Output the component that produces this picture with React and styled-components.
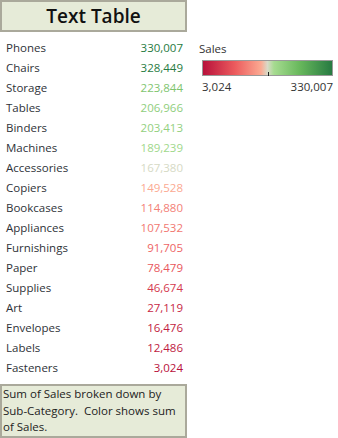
import styled, { createGlobalStyle } from "styled-components";

const GlobalStyle = createGlobalStyle`
  body {
    margin: 0;
    background: #fff;
    font-family: "Open Sans", "DejaVu Sans", sans-serif;
  }
`;

const STOPS = [
  [0, [184, 17, 59]],
  [0.25, [236, 92, 94]],
  [0.45, [251, 170, 146]],
  [0.5, [217, 218, 200]],
  [0.55, [166, 219, 144]],
  [0.75, [104, 184, 92]],
  [1, [39, 122, 66]],
];

const MIN = 3024;
const MAX = 330007;

const colorFor = (value) => {
  const t = (value - MIN) / (MAX - MIN);
  for (let i = 1; i < STOPS.length; i++) {
    const [t1, c1] = STOPS[i];
    const [t0, c0] = STOPS[i - 1];
    if (t <= t1) {
      const k = (t - t0) / (t1 - t0);
      const c = c0.map((v, j) => Math.round(v + (c1[j] - v) * k));
      return `rgb(${c.join(",")})`;
    }
  }
  return "rgb(39,122,66)";
};

const rows = [
  ["Phones", 330007],
  ["Chairs", 328449],
  ["Storage", 223844],
  ["Tables", 206966],
  ["Binders", 203413],
  ["Machines", 189239],
  ["Accessories", 167380],
  ["Copiers", 149528],
  ["Bookcases", 114880],
  ["Appliances", 107532],
  ["Furnishings", 91705],
  ["Paper", 78479],
  ["Supplies", 46674],
  ["Art", 27119],
  ["Envelopes", 16476],
  ["Labels", 12486],
  ["Fasteners", 3024],
];

const Page = styled.div`
  display: flex;
  width: 338px;
  height: 438px;
`;

const LeftColumn = styled.div`
  width: 187px;
  display: flex;
  flex-direction: column;
`;

const TitleBox = styled.div`
  height: 30px;
  border: 2px solid #aaa99b;
  background: #e6ebd8;
  display: flex;
  align-items: center;
  justify-content: center;
  font-size: 19px;
  font-weight: 600;
  color: #111;
`;

const Table = styled.div`
  padding: 5px 4px 0 6px;
  display: flex;
  flex-direction: column;
`;

const Row = styled.div`
  height: 20px;
  display: flex;
  align-items: center;
  justify-content: space-between;
  font-size: 11.5px;
`;

const Label = styled.span`
  color: #2e3238;
`;

const Value = styled.span`
  color: ${(p) => p.$color};
`;

const Caption = styled.div`
  margin-top: 7px;
  height: 53px;
  border: 2px solid #aaa99b;
  background: #e6ebd8;
  padding: 0 0 0 1px;
  font-size: 11.5px;
  line-height: 16.5px;
  color: #222;
`;

const Legend = styled.div`
  margin: 41px 0 0 12px;
  display: flex;
  flex-direction: column;
  width: 134px;
`;

const LegendTitle = styled.div`
  font-size: 11.5px;
  color: #333;
  margin-bottom: 4px;
`;

const Ramp = styled.div`
  position: relative;
  margin-left: 3px;
  height: 14px;
  border: 1px solid #999;
  background: linear-gradient(
    to right,
    #b8113b 0%,
    #ec5c5e 25%,
    #fbaa92 45%,
    #d9dac8 50%,
    #a6db90 55%,
    #68b85c 75%,
    #277a42 100%
  );
`;

const Tick = styled.div`
  position: absolute;
  left: 50%;
  bottom: -1px;
  width: 1px;
  height: 4px;
  background: #222;
`;

const RampLabels = styled.div`
  margin-left: 3px;
  display: flex;
  justify-content: space-between;
  font-size: 11.5px;
  color: #333;
  margin-top: 3px;
`;

export default function App() {
  return (
    <Page>
      <GlobalStyle />
      <LeftColumn>
        <TitleBox>Text Table</TitleBox>
        <Table>
          {rows.map(([name, v]) => (
            <Row key={name}>
              <Label>{name}</Label>
              <Value $color={colorFor(v)}>{v.toLocaleString("en-US")}</Value>
            </Row>
          ))}
        </Table>
        <Caption>
          Sum of Sales broken down by
          <br />
          Sub-Category.&nbsp; Color shows sum
          <br />
          of Sales.
        </Caption>
      </LeftColumn>
      <Legend>
        <LegendTitle>Sales</LegendTitle>
        <Ramp>
          <Tick />
        </Ramp>
        <RampLabels>
          <span>3,024</span>
          <span>330,007</span>
        </RampLabels>
      </Legend>
    </Page>
  );
}
